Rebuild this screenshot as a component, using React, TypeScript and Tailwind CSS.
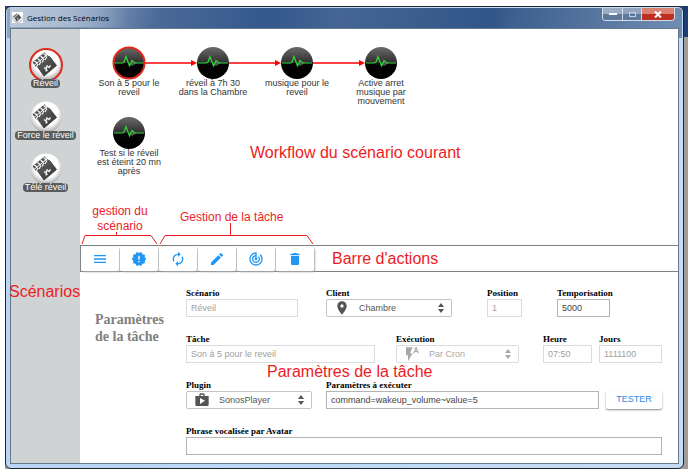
import React from 'react';
import {
  MdMenu,
  MdNewReleases,
  MdAutorenew,
  MdEdit,
  MdTrackChanges,
  MdDelete,
  MdPlace,
  MdFlashAuto,
  MdShop,
} from 'react-icons/md';

const sans = "font-['Liberation_Sans',Arial,sans-serif]";
const serif = "font-['Liberation_Serif','Times_New_Roman',serif]";

function Clapper({ className }: { className: string }) {
  return (
    <svg viewBox="0 0 32 32" className={className} aria-hidden="true">
      <defs>
        <radialGradient id="ball" cx="0.5" cy="0.4" r="0.6">
          <stop offset="0" stopColor="#fff" />
          <stop offset="0.65" stopColor="#fff" />
          <stop offset="1" stopColor="#a8a8a8" />
        </radialGradient>
        <linearGradient id="slate" x1="0" y1="0" x2="1" y2="1">
          <stop offset="0" stopColor="#6a6a6a" />
          <stop offset="1" stopColor="#2c2c2c" />
        </linearGradient>
      </defs>
      <circle cx="16" cy="16" r="15.5" fill="url(#ball)" />
      <path d="M7 17L19.500 7.500L26.500 16.500L14 27Z" fill="url(#slate)" stroke="#444" strokeWidth="1" strokeLinejoin="round" />
      <path d="M3.500 14.500L15.500 4.500" stroke="#555" strokeWidth="3" />
      <path d="M5.500 17.500L18.500 7" stroke="#4a4a4a" strokeWidth="2.600" />
      <path d="M4.500 12l3 2.500M7.500 9.500l3 2.500M10.500 7l3 2.500M13.500 4.500l3 2.500M6 18.500l2-3.500M9 16l2-3.500M12 13.500l2-3.500M15 11l2-3.500" stroke="#f4f4f4" strokeWidth="1.300" />
      <path d="M14 18.500l2 1.500 1-3 2 1.500 1.500-2M15.500 22l2-1" fill="none" stroke="#ededed" strokeWidth="1.500" />
    </svg>
  );
}

function Scenario({ name, active = false }: { name: string; active?: boolean }) {
  return (
    <button type="button" className="flex w-full flex-col items-center">
      <span className={`block size-8 rounded-full ${active ? 'outline-2 -outline-offset-1 outline-[#e02a1c]' : ''}`}>
        <Clapper className="size-8" />
      </span>
      <span className="relative -mt-0.5 rounded-sm bg-[#5a5c5c] px-0.5 text-[9px] leading-[9px] whitespace-nowrap text-white">
        {name}
      </span>
    </button>
  );
}

function Task({ label, place, active = false }: { label: string; place: string; active?: boolean }) {
  return (
    <button type="button" className={`absolute flex w-[72px] flex-col items-center ${place}`}>
      <svg viewBox="0 0 32 32" className="size-8 shrink-0 overflow-visible" aria-hidden="true">
        <defs>
          <linearGradient id="orb" x1="0" y1="0" x2="0" y2="1">
            <stop offset="0" stopColor="#6b6b6b" />
            <stop offset="0.480" stopColor="#303030" />
            <stop offset="0.520" stopColor="#050505" />
            <stop offset="1" stopColor="#000" />
          </linearGradient>
        </defs>
        <circle cx="16" cy="16" r="16" fill="url(#orb)" />
        <path d="M15 16l5-2 4 2-5 3z" fill="#555" />
        <path d="M1 16h8.500l1.500-1 2-5.500 3.500 9.500 2.500-5.500 3 2.500h9" fill="none" stroke="#2fd43a" strokeWidth="1.200" />
        {active && <circle cx="16" cy="16" r="15.500" fill="none" stroke="#e02a1c" strokeWidth="2" />}
      </svg>
      <span className="text-center text-[9px] leading-[9px] text-[#333]">{label}</span>
    </button>
  );
}

function Arrow({ place }: { place: string }) {
  return (
    <svg viewBox="0 0 52 8" className={`absolute h-2 w-[52px] ${place}`} aria-hidden="true">
      <path d="M0 4h46" stroke="#f00" strokeWidth="1.700" />
      <path d="M46 1l6 3-6 3z" fill="#f00" />
    </svg>
  );
}

function Tool({ label, children }: { label: string; children: React.ReactNode }) {
  return (
    <button
      type="button"
      aria-label={label}
      className="flex h-6 w-[38px] items-center justify-center rounded-xs bg-white text-[#2196f3] shadow-[1px_1px_2px_#aaa]"
    >
      {children}
    </button>
  );
}

type FieldProps = { id: string; label: string; value: string; place: string; disabled?: boolean };

function Label({ id, children }: { id: string; children: string }) {
  return (
    <label htmlFor={id} className={`block text-[9px] leading-3 font-bold whitespace-nowrap text-black ${serif}`}>
      {children}
    </label>
  );
}

function Field({ id, label, value, place, disabled = false }: FieldProps) {
  return (
    <div className={place}>
      <Label id={id}>{label}</Label>
      <input
        id={id}
        defaultValue={value}
        disabled={disabled}
        className={`block h-[18px] w-full border px-1 text-[9px] ${
          disabled ? 'border-[#dcdcdc] text-[#a0a0a0]' : 'border-[#b4b4b4] text-[#444]'
        }`}
      />
    </div>
  );
}

function Picker({ id, label, value, place, disabled = false, icon }: FieldProps & { icon: React.ReactNode }) {
  return (
    <div className={place}>
      <Label id={id}>{label}</Label>
      <div className={`relative ${disabled ? 'text-[#a8a8a8]' : 'text-[#555]'}`}>
        <select
          id={id}
          disabled={disabled}
          className={`block h-[18px] w-full appearance-none rounded-xs border pt-px pl-8 text-[9px] opacity-100 ${
            disabled ? 'border-[#dcdcdc]' : 'border-[#c4c4c4]'
          }`}
        >
          <option>{value}</option>
        </select>
        <span className="pointer-events-none absolute inset-y-0 left-2 flex items-center">{icon}</span>
        <svg viewBox="0 0 6 10" className="pointer-events-none absolute top-1 right-2 h-2.5 w-1.5" fill="currentColor" aria-hidden="true">
          <path d="M0 4l3-4 3 4zM0 6h6l-3 4z" />
        </svg>
      </div>
    </div>
  );
}

function TitleBar() {
  return (
    <header className="flex h-5 items-start justify-between">
      <div className="flex h-[19px] items-center gap-1 bg-linear-to-r from-white/40 via-white/30 to-transparent pr-5 pl-0.5">
        <Clapper className="size-[11px] bg-white" />
        <h1 className="font-['Open_Sans','Noto_Sans',sans-serif] text-[8px] text-black">Gestion des Scénarios</h1>
      </div>
      <div className="mr-1 flex h-[13px] overflow-hidden rounded-b-sm border border-t-0 border-[#d3dce8] text-white">
        <button type="button" aria-label="Réduire" className="flex w-5 items-center justify-center border-r border-[#d3dce8] bg-linear-to-b from-[#9badc5] from-50% to-[#5e7899] to-50%">
          <span className="h-0.5 w-2 bg-white" />
        </button>
        <button type="button" aria-label="Agrandir" className="flex w-[19px] items-center justify-center border-r border-[#d3dce8] bg-linear-to-b from-[#91a5bf] from-50% to-[#5e7899] to-50%">
          <span className="h-[5px] w-[7px] border border-[#c5cfdd]" />
        </button>
        <button type="button" aria-label="Fermer" className="flex w-8 items-center justify-center bg-linear-to-b from-[#d98272] from-50% to-[#bd2f20] to-50%">
          <svg viewBox="0 0 8 7" className="h-[7px] w-2" aria-hidden="true">
            <path d="M1 0.500l6 6M7 0.500l-6 6" stroke="#fff" strokeWidth="2" />
          </svg>
        </button>
      </div>
    </header>
  );
}

function Note({ place, children }: { place: string; children: string }) {
  return <p className={`pointer-events-none absolute text-center text-[#ed1c24] ${place}`}>{children}</p>;
}

export default function App() {
  return (
    <div className={`h-screen bg-white pt-1.5 pr-[5px] pb-0.5 pl-[5px] ${sans}`}>
      <div className="h-full bg-[linear-gradient(#1c3c74_31px,#a39d9a_31px)] pr-1">
        <div className="flex h-full flex-col rounded-md border border-[#20262e] bg-[linear-gradient(90deg,#b9d5f5,#c5dcf5)] p-px">
          <div className="flex min-h-0 flex-1 flex-col rounded-sm bg-[linear-gradient(100deg,#8fa5c1_0px,#7b95b8_90px,#4a6a98_150px,#34588c_260px,#456694_330px,#315588_480px,#3d608f_500px,#6e8bb0_660px)] bg-size-[100%_30px] bg-no-repeat px-[3px] pb-[3px]">
            <TitleBar />
            <div className="flex min-h-0 flex-1 border border-[#68798c]">
              <aside className="relative w-[69px] shrink-0 bg-[#cfd3d3] pt-5">
                <nav className="flex flex-col gap-[13px]">
                  <Scenario name="Réveil" active />
                  <Scenario name="Force le réveil" />
                  <Scenario name="Télé réveil" />
                </nav>
                <Note place="top-[251px] -left-0.5 text-base">Scénarios</Note>
              </aside>
              <main className="flex min-w-0 flex-1 flex-col bg-white">
                <section className="relative h-[216px] shrink-0">
                  <Arrow place="top-[30px] left-[65px]" />
                  <Arrow place="top-[30px] left-[149px]" />
                  <Arrow place="top-[30px] left-[233px]" />
                  <Task label="Son à 5 pour le reveil" place="top-[18px] left-[13px]" active />
                  <Task label="réveil à 7h 30 dans la Chambre" place="top-[18px] left-[97px]" />
                  <Task label="musique pour le reveil" place="top-[18px] left-[181px]" />
                  <Task label="Active arret musique par mouvement" place="top-[18px] left-[265px]" />
                  <Task label="Test si le réveil est éteint 20 mn après" place="top-[88px] left-[13px]" />
                  <Note place="top-[112px] left-[170px] text-base">Workflow du scénario courant</Note>
                  <Note place="top-[175px] left-[8px] w-[64px] text-[12px] leading-[15px]">gestion du scénario</Note>
                  <Note place="top-[181px] left-[100px] text-[12px] leading-[15px] whitespace-nowrap">Gestion de la tâche</Note>
                  <svg viewBox="0 0 236 24" className="absolute top-[194px] left-0 h-6 w-[236px]" fill="none" stroke="#ed1c24" aria-hidden="true">
                    <path d="M2 21l3-8.500h66L77 21M36.500 9v4M80 21l5-8.500h142l6 8.500M150.500 0v12" />
                  </svg>
                </section>
                <div role="toolbar" className="flex h-[27px] shrink-0 items-center gap-px border-y border-l border-[#808080]">
                  <Tool label="Menu"><MdMenu className="size-4" /></Tool>
                  <Tool label="Exécuter"><MdNewReleases className="size-4" /></Tool>
                  <Tool label="Actualiser"><MdAutorenew className="size-4" /></Tool>
                  <Tool label="Modifier"><MdEdit className="size-4" /></Tool>
                  <Tool label="Suivre"><MdTrackChanges className="size-4" /></Tool>
                  <Tool label="Supprimer"><MdDelete className="size-4" /></Tool>
                  <p className="pl-[17px] text-base text-[#ed1c24]">Barre d'actions</p>
                </div>
                <section className="relative flex pt-[15px] pr-4 pl-[15px]">
                  <h2 className={`w-[91px] shrink-0 pt-6 text-[14px] leading-[17px] font-bold text-[#808080] ${serif}`}>
                    Paramètres
                    <br />
                    de la tâche
                  </h2>
                  <form className="grid flex-1 grid-cols-68 gap-y-4" onSubmit={(e) => e.preventDefault()}>
                    <Field id="scenario" label="Scénario" value="Réveil" place="col-span-16 col-start-1" disabled />
                    <Picker id="client" label="Client" value="Chambre" place="col-span-18 col-start-21" icon={<MdPlace className="size-4" />} />
                    <Field id="position" label="Position" value="1" place="col-span-5 col-start-44" disabled />
                    <Field id="tempo" label="Temporisation" value="5000" place="col-span-8 col-start-54 mr-[3px]" />

                    <Field id="tache" label="Tâche" value="Son à 5 pour le reveil" place="col-span-27 col-start-1" disabled />
                    <Picker id="execution" label="Exécution" value="Par Cron" place="col-span-18 col-start-31 mr-[3px]" disabled icon={<MdFlashAuto className="size-4" />} />
                    <Field id="heure" label="Heure" value="07:50" place="col-span-7 col-start-52" disabled />
                    <Field id="jours" label="Jours" value="1111100" place="col-span-9 col-start-60" disabled />

                    <Picker id="plugin" label="Plugin" value="SonosPlayer" place="col-span-18 col-start-1" icon={<MdShop className="size-4" />} />
                    <Field id="params" label="Paramètres à exécuter" value="command=wakeup_volume~value=5" place="col-span-39 col-start-21" />
                    <button type="submit" className="col-span-8 col-start-61 h-[18px] self-end rounded-xs bg-white text-[9px] text-[#2b8ae6] shadow-[0_1px_2px_#888]">
                      TESTER
                    </button>

                    <Field id="phrase" label="Phrase vocalisée par Avatar" value="" place="col-span-68 col-start-1" />
                  </form>
                  <Note place="top-[88px] left-[187px] text-base whitespace-nowrap">Paramètres de la tâche</Note>
                </section>
              </main>
            </div>
          </div>
        </div>
      </div>
    </div>
  );
}
